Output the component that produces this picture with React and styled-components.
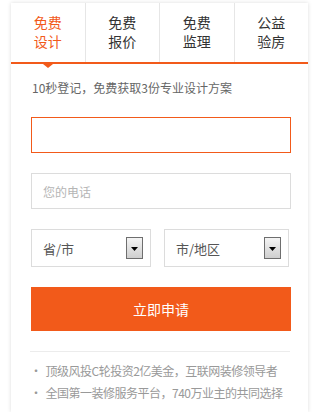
import React from 'react';
import styled, { createGlobalStyle } from 'styled-components';

const orange = '#f25a1a';

const GlobalStyle = createGlobalStyle`
    body {
        margin: 0;
        background: #fff;
        font-family: "Noto Sans CJK SC", "Noto Sans", sans-serif;
    }
`;

const tabs = [
    ['免费', '设计'],
    ['免费', '报价'],
    ['免费', '监理'],
    ['公益', '验房']
];

function Arrow() {
    return (
        <ArrowBox>
            <svg width="7" height="4" viewBox="0 0 7 4">
                <path d="M0 0h7L3.5 4z" fill="#000" />
            </svg>
        </ArrowBox>
    );
}

function App() {
    return (
        <>
            <GlobalStyle />
            <Card>
                <TabBar>
                    {tabs.map((t, i) => (
                        <Tab key={i} active={i === 0}>
                            <TabLine>{t[0]}</TabLine>
                            <TabLine>{t[1]}</TabLine>
                        </Tab>
                    ))}
                </TabBar>
                <Body>
                    <Intro>10秒登记，免费获取3份专业设计方案</Intro>
                    <Field focused />
                    <Field>
                        <Placeholder>您的电话</Placeholder>
                    </Field>
                    <SelectRow>
                        <Select w={120}>
                            <span>省/市</span>
                            <Arrow />
                        </Select>
                        <Select w={125}>
                            <span>市/地区</span>
                            <Arrow />
                        </Select>
                    </SelectRow>
                    <Submit>立即申请</Submit>
                    <Divider />
                    <Notes>
                        <li>顶级风投C轮投资2亿美金，互联网装修领导者</li>
                        <li>全国第一装修服务平台，740万业主的共同选择</li>
                    </Notes>
                </Body>
            </Card>
        </>
    );
}

const Card = styled.div`
    width: 297px;
    height: 409px;
    margin: 3px 0 0 11px;
    background: #fff;
    box-shadow: 0 0 4px rgba(0, 0, 0, 0.14);
    box-sizing: border-box;
`;

const TabBar = styled.div`
    display: flex;
    height: 61px;
    border-bottom: 2px solid ${orange};
    box-sizing: border-box;
`;

const Tab = styled.div`
    position: relative;
    flex: 1;
    display: flex;
    flex-direction: column;
    align-items: center;
    justify-content: center;
    gap: 0;
    font-size: 14px;
    color: ${(p) => (p.active ? orange : '#333')};
    border-right: 1px solid #e6e6e6;
    padding-bottom: 2px;

    &:last-child {
        border-right: none;
    }

    &::after {
        content: '';
        display: ${(p) => (p.active ? 'block' : 'none')};
        position: absolute;
        left: 50%;
        bottom: -6px;
        margin-left: -5px;
        border-left: 5px solid transparent;
        border-right: 5px solid transparent;
        border-top: 4px solid ${orange};
    }
`;

const TabLine = styled.span`
    display: block;
    line-height: 19px;
    height: 19px;
`;

const Body = styled.div`
    padding: 14px 17px 0 20px;
`;

const Intro = styled.p`
    margin: 0 0 19px 1px;
    font-size: 12px;
    line-height: 20px;
    color: #666;
`;

const Field = styled.div`
    height: 36px;
    border: 1px solid ${(p) => (p.focused ? orange : '#dcdcdc')};
    box-sizing: border-box;
    display: flex;
    align-items: center;
    padding: 0 11px;
    margin-bottom: 20px;
`;

const Placeholder = styled.span`
    font-size: 12px;
    color: #b5b5b5;
`;

const SelectRow = styled.div`
    display: flex;
    gap: 13px;
    margin-bottom: 20px;
`;

const Select = styled.div`
    width: ${(p) => p.w}px;
    height: 38px;
    border: 1px solid #dcdcdc;
    box-sizing: border-box;
    display: flex;
    align-items: center;
    justify-content: space-between;
    padding: 0 7px 0 11px;
    font-size: 13px;
    color: #555;
`;

const ArrowBox = styled.span`
    width: 17px;
    height: 22px;
    box-sizing: border-box;
    border: 1px solid #6e6e6e;
    background: linear-gradient(#f4f4f4, #cfcfcf);
    display: flex;
    align-items: flex-start;
    justify-content: center;
    padding-top: 9px;

    svg {
        display: block;
    }
`;

const Submit = styled.button`
    display: block;
    width: 260px;
    height: 44px;
    border: none;
    background: ${orange};
    color: #fff;
    font-family: inherit;
    font-size: 14px;
    cursor: pointer;
`;

const Divider = styled.hr`
    margin: 20px 0 0 -1px;
    width: 260px;
    border: none;
    border-top: 1px solid #ececec;
`;

const Notes = styled.ul`
    list-style: none;
    margin: 8px 0 0 -1px;
    padding: 0;
    font-size: 12px;
    line-height: 22px;
    color: #999;
    white-space: nowrap;
    letter-spacing: -0.5px;

    li::before {
        content: '·';
        margin-right: 4px;
    }
`;

export default App;
